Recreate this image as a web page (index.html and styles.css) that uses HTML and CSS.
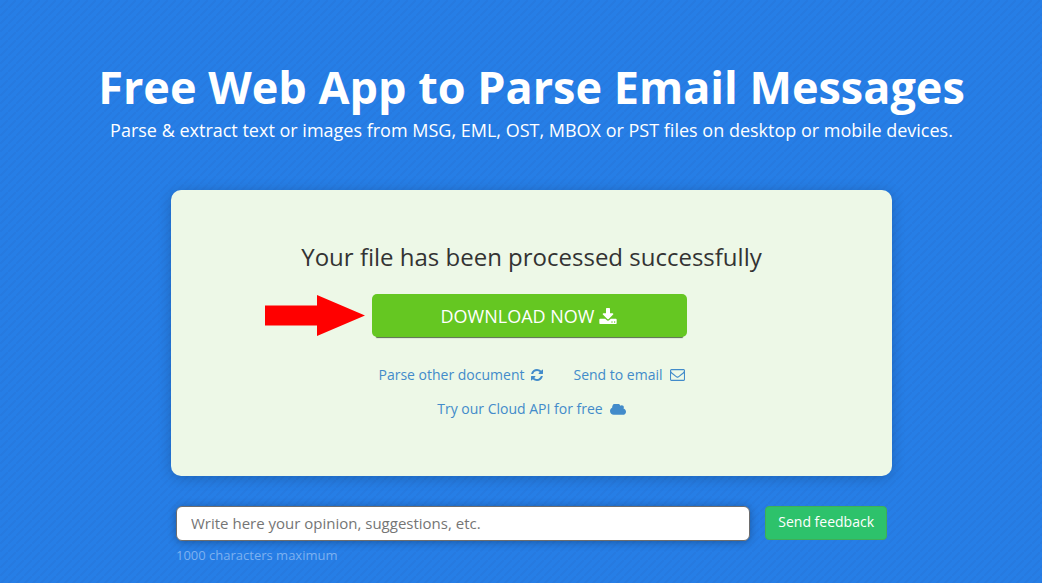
FILE: index.html
```html
<!DOCTYPE html>
<html lang="en">
<head>
<meta charset="utf-8">
<meta name="viewport" content="width=device-width, initial-scale=1">
<title>Free Web App to Parse Email Messages</title>
<link rel="stylesheet" href="styles.css">
</head>
<body>
<main class="page">
  <header class="intro">
    <h1 class="title">Free Web App to Parse Email Messages</h1>
    <p class="subtitle">Parse &amp; extract text or images from MSG, EML, OST, MBOX or PST files on desktop or mobile devices.</p>
  </header>

  <section class="result">
    <h2 class="result-title">Your file has been processed successfully</h2>
    <div class="download">
      <svg class="pointer" viewBox="0 0 100 41" aria-hidden="true"><path fill="#f00" d="M0 10.500H52V0L100 20.500 52 41V30.500H0z"/></svg>
      <button class="download-button" type="button">DOWNLOAD NOW
        <svg class="icon icon-download" viewBox="0 0 1664 1536" aria-hidden="true"><path d="M1280 1344q0-26-19-45t-45-19-45 19-19 45 19 45 45 19 45-19 19-45zm256 0q0-26-19-45t-45-19-45 19-19 45 19 45 45 19 45-19 19-45zm128-224v320q0 40-28 68t-68 28h-1472q-40 0-68-28t-28-68v-320q0-40 28-68t68-28h465l135 136q58 56 136 56t136-56l136-136h464q40 0 68 28t28 68zm-325-569q17 41-14 70l-448 448q-18 19-45 19t-45-19l-448-448q-31-29-14-70 17-39 59-39h256v-448q0-26 19-45t45-19h256q26 0 45 19t19 45v448h256q42 0 59 39z"/></svg>
      </button>
    </div>
    <nav class="links">
      <a class="link" href="#">Parse other document
        <svg class="icon icon-refresh" viewBox="0 128 1536 1536" aria-hidden="true"><path d="M1511 1056q0 5-1 7-64 268-268 434.500t-478 166.500q-146 0-282.500-55t-243.500-157l-129 129q-19 19-45 19t-45-19-19-45v-448q0-26 19-45t45-19h448q26 0 45 19t19 45-19 45l-137 137q71 66 161 102t187 36q134 0 250-65t186-179q11-17 53-117 8-23 30-23h192q13 0 22.500 9.500t9.500 22.500zm25-800v448q0 26-19 45t-45 19h-448q-26 0-45-19t-19-45 19-45l138-138q-148-137-349-137-134 0-250 65t-186 179q-11 17-53 117-8 23-30 23h-199q-13 0-22.500-9.500t-9.500-22.500v-7q65-268 270-434.500t480-166.500q146 0 284 55.500t245 156.500l130-129q19-19 45-19t45 19 19 45z"/></svg>
      </a>
      <a class="link" href="#">Send to email
        <svg class="icon icon-mail" viewBox="0 256 1792 1408" aria-hidden="true"><path d="M1664 1504v-768q-32 36-69 66-268 206-426 338-51 43-83 67t-86.500 48.500-102.500 24.500h-2q-48 0-102.500-24.500t-86.500-48.500-83-67q-158-132-426-338-37-30-69-66v768q0 13 9.500 22.500t22.500 9.500h1472q13 0 22.500-9.500t9.500-22.500zm0-1051v-24.500l-.5-13-3-12.500-5.500-9-9-7.500-14-2.500h-1472q-13 0-22.500 9.500t-9.500 22.500q0 168 147 284 193 152 401 317 6 5 35 29.500t46 37.500 44.500 31.500 50.500 27.500 43 9h2q20 0 43-9t50.500-27.500 44.500-31.500 46-37.500 35-29.500q208-165 401-317 54-43 100.500-115.500t46.500-131.500zm128-37v1088q0 66-47 113t-113 47h-1472q-66 0-113-47t-47-113v-1088q0-66 47-113t113-47h1472q66 0 113 47t47 113z"/></svg>
      </a>
      <a class="link" href="#">Try our Cloud API for free
        <svg class="icon icon-cloud" viewBox="0 256 1920 1280" aria-hidden="true"><path d="M1920 1152q0 159-112.500 271.500t-271.500 112.500h-1088q-185 0-316.500-131.500t-131.500-316.500q0-132 71-241.500t187-163.500q-2-28-2-43 0-212 150-362t362-150q158 0 286.500 88t187.500 230q70-62 166-62 106 0 181 75t75 181q0 75-41 138 129 30 213 134.500t84 239.500z"/></svg>
      </a>
    </nav>
  </section>

  <form class="feedback">
    <div class="feedback-field">
      <input class="feedback-input" type="text" maxlength="1000" placeholder="Write here your opinion, suggestions, etc." aria-label="Feedback" aria-describedby="limit">
      <p class="feedback-note" id="limit">1000 characters maximum</p>
    </div>
    <button class="feedback-button" type="button">Send feedback</button>
  </form>
</main>
</body>
</html>
```

FILE: styles.css
```css
* { box-sizing: border-box; }

body {
  margin: 0;
  min-height: 100vh;
  overflow-x: hidden;
  background: linear-gradient(135deg, #267ee6 40%, #267ae0 40% 60%, #267ee6 60%) 0 0 / 8px 8px;
  color: #fff;
  font-family: "Open Sans", "Noto Sans", sans-serif;
}

h1, h2, p { margin: 0; }

.page {
  display: flex;
  flex-direction: column;
  align-items: center;
  padding: 62px 16px 16px 37px;
}

.intro { text-align: center; }

.title {
  font-size: 45px;
  line-height: 50px;
  font-weight: 700;
}

.subtitle {
  font-size: 18px;
  line-height: 36px;
}

.result {
  display: flex;
  flex-direction: column;
  align-items: center;
  width: 100%;
  max-width: 721px;
  margin-top: 42px;
  padding: 50px 16px;
  border-radius: 10px;
  background: #edf8e7;
  box-shadow: 0 2px 14px rgba(0, 0, 0, .2);
}

.result-title {
  color: #333;
  font-size: 24px;
  line-height: 34px;
  font-weight: 400;
}

.download {
  position: relative;
  width: 100%;
  max-width: 315px;
  margin: 20px 5px 0 0;
}

.pointer {
  position: absolute;
  top: 1px;
  right: calc(100% + 7px);
  width: 100px;
  height: 41px;
}

.download-button {
  display: flex;
  align-items: center;
  justify-content: center;
  gap: 5px;
  width: 100%;
  height: 43px;
  padding: 0;
  border: 0;
  border-radius: 5px;
  background: #65c722;
  box-shadow: 0 5px 1px -4px #556b4b;
  color: #fff;
  font: 18px/24px "Open Sans", "Noto Sans", sans-serif;
}

.icon { fill: currentColor; }
.icon-download { width: 18px; height: 16px; }
.icon-refresh { width: 12px; height: 12px; }
.icon-mail { width: 15px; height: 12px; }
.icon-cloud { width: 16px; height: 11px; }

.links {
  display: flex;
  flex-wrap: wrap;
  justify-content: center;
  gap: 10px 30px;
  max-width: 340px;
  margin: 26px 0 5px;
}

.link {
  display: flex;
  align-items: center;
  gap: 7px;
  color: #428bca;
  font-size: 14px;
  line-height: 24px;
  text-decoration: none;
}

.feedback {
  display: flex;
  align-items: flex-start;
  gap: 15px;
  width: 100%;
  max-width: 711px;
  margin-top: 30px;
}

.feedback-field { flex: 1; }

.feedback-input {
  display: block;
  width: 100%;
  height: 35px;
  padding: 0 14px 2px;
  border: 1px solid #6d6d6d;
  border-radius: 6px;
  background: #fff;
  box-shadow: 0 1px 8px rgba(0, 0, 0, .3);
  color: #333;
  font: 15px/20px "Open Sans", "Noto Sans", sans-serif;
}

.feedback-input::placeholder { color: #757575; opacity: 1; }

.feedback-note {
  margin-top: 4px;
  color: #7db1f0;
  font-size: 13px;
  line-height: 20px;
}

.feedback-button {
  height: 34px;
  padding: 0 12px 2px;
  border: 1px solid #3fae57;
  border-radius: 4px;
  background: #2dc26b;
  color: #fff;
  font: 14px/20px "Open Sans", "Noto Sans", sans-serif;
}
```
